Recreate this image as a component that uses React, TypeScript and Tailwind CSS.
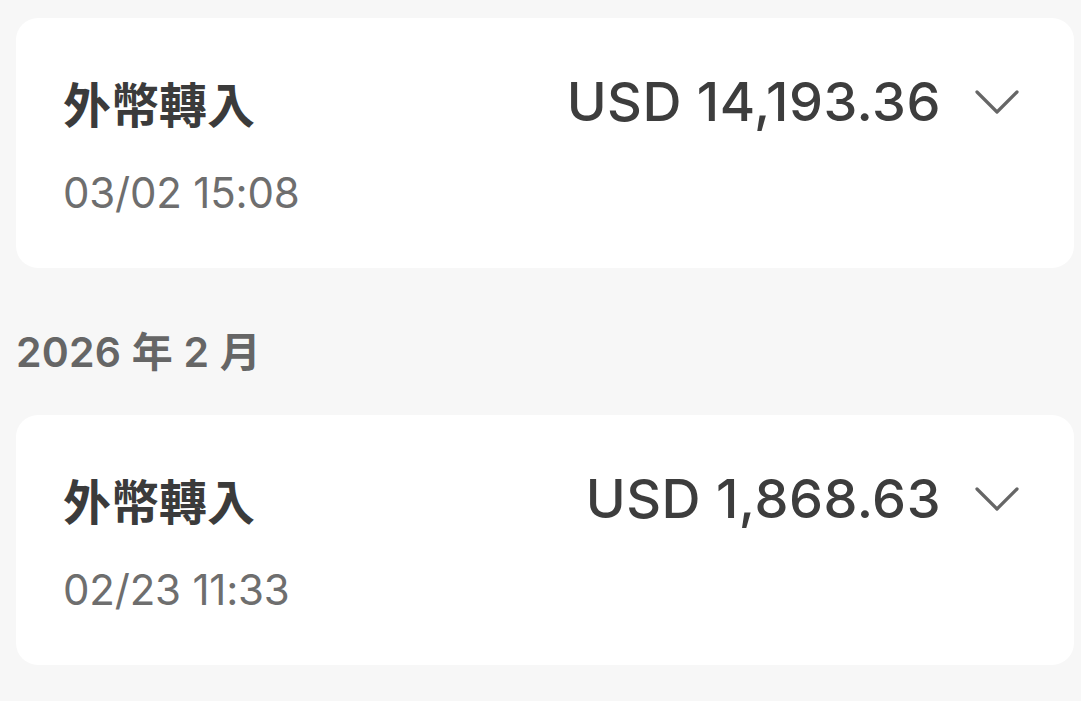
import React from "react";

const latin = '"Inter", "Noto Sans CJK TC", sans-serif';
const cjk = '"Noto Sans CJK TC", "Inter", sans-serif';

function Chevron() {
  return (
    <svg width="46" height="27" viewBox="0 0 46 27" fill="none" className="shrink-0">
      <path d="M3 3 L23 23 L43 3" stroke="#666666" strokeWidth="3.2" strokeLinecap="round" strokeLinejoin="round" />
    </svg>
  );
}

function Card({ amount, date }: { amount: string; date: string }) {
  return (
    <div className="mx-[16px] w-[1058px] h-[250px] rounded-[22px] bg-white pl-[47px] pr-[54px] pt-[54px]">
      <div className="flex items-center justify-between h-[60px]">
        <div className="text-[48px] font-bold text-[#3b3b3b] leading-none" style={{ fontFamily: cjk }}>
          外幣轉入
        </div>
        <div className="flex items-center gap-[33px]">
          <div className="text-[54px] font-medium text-[#3d3d3d] leading-none tracking-[0.5px]" style={{ fontFamily: latin }}>
            {amount}
          </div>
          <Chevron />
        </div>
      </div>
      <div className="mt-[41px] h-[40px] flex items-center text-[42px] text-[#6e6e6e] leading-none tracking-[-0.2px]" style={{ fontFamily: latin }}>
        {date}
      </div>
    </div>
  );
}

export default function App() {
  return (
    <div className="w-[1081px] h-[701px] bg-[#f7f7f7] overflow-hidden pt-[18px]">
      <Card amount="USD 14,193.36" date="03/02 15:08" />
      <div className="mt-[64px] mb-[43px] h-[40px] flex items-center pl-[16px] text-[41px] font-semibold text-[#666666] leading-none tracking-[0.2px]" style={{ fontFamily: latin }}>
        2026 年 2 月
      </div>
      <Card amount="USD 1,868.63" date="02/23 11:33" />
    </div>
  );
}
